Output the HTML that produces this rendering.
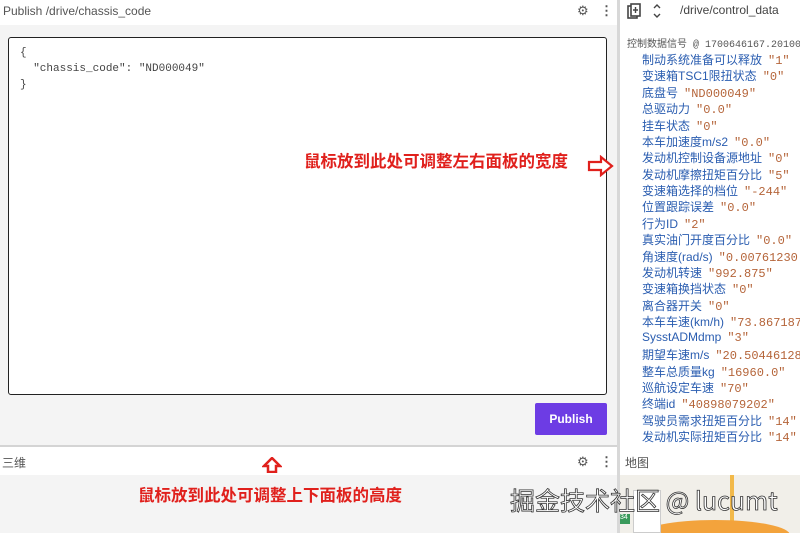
<!DOCTYPE html>
<html style="overflow:hidden;width:800px;height:533px"><head><meta charset="utf-8"><style>
*{margin:0;padding:0;box-sizing:border-box}
body{width:800px;height:533px;overflow:hidden;background:#f4f4f4;font-family:"Liberation Sans","Noto Sans CJK SC",sans-serif;position:relative}
.abs{position:absolute}
.hdr{font-size:12px;color:#555}
.mono{font-family:"Liberation Mono","Noto Sans CJK SC",monospace}
.row{position:absolute;left:642px;font-size:12px;color:#2a5db0;white-space:nowrap}
.row span{color:#b5653a;font-family:"Liberation Mono",monospace;margin-left:6px}
.red{color:#e0201c;font-weight:bold;font-size:16.5px;font-family:"Noto Sans CJK SC",sans-serif;white-space:nowrap}
</style></head><body>
<div class="abs" style="left:0;top:0;width:617px;height:25px;background:#fff"></div>
<div class="abs hdr" style="left:3px;top:4px">Publish /drive/chassis_code</div>
<div class="abs" style="left:577px;top:3px;font-size:13px;color:#555">⚙</div>
<div class="abs" style="left:600px;top:3px;font-size:13px;color:#555;font-weight:bold">⋮</div>
<div class="abs" style="left:8px;top:37px;width:599px;height:358px;background:#fff;border:1px solid #222;border-radius:3px"></div>
<div class="abs mono" style="left:20px;top:45px;font-size:11px;line-height:16px;color:#444;white-space:pre">{
  "chassis_code": "ND000049"
}</div>
<div class="abs" style="left:535px;top:403px;width:72px;height:32px;background:#6d3ce4;border-radius:2px;color:#fff;font-size:12px;font-weight:bold;text-align:center;line-height:32px">Publish</div>
<div class="abs" style="left:0;top:445px;width:620px;height:2px;background:#d4d4d4"></div>
<div class="abs" style="left:0;top:447px;width:618px;height:28px;background:#fff"></div>
<div class="abs hdr" style="left:2px;top:454px">三维</div>
<div class="abs" style="left:577px;top:454px;font-size:13px;color:#555">⚙</div>
<div class="abs" style="left:600px;top:454px;font-size:13px;color:#555;font-weight:bold">⋮</div>
<svg class="abs" style="left:262px;top:457px" width="20" height="16"><path d="M10 1 L18 9 H14 V15 H6 V9 H2 Z" fill="#fff" stroke="#e0201c" stroke-width="2.5"/></svg>
<div class="abs red" style="left:138px;top:482px">鼠标放到此处可调整上下面板的高度</div>
<div class="abs" style="left:617px;top:0;width:3px;height:533px;background:#d8d8d8"></div>
<div class="abs" style="left:620px;top:0;width:180px;height:447px;background:#fff"></div>
<svg class="abs" style="left:627px;top:3px" width="14" height="16"><rect x="1" y="3" width="9" height="12" fill="none" stroke="#444" stroke-width="1.6"/><rect x="4" y="1" width="9" height="12" fill="#fff" stroke="#444" stroke-width="1.6"/><path d="M8.5 4v6M6 7h5" stroke="#444" stroke-width="1.4"/></svg>
<svg class="abs" style="left:652px;top:3px" width="10" height="16"><path d="M2 5 L5 2 L8 5 M2 11 L5 14 L8 11" fill="none" stroke="#444" stroke-width="1.4"/></svg>
<div class="abs" style="left:680px;top:3px;font-size:12px;color:#444">/drive/control_data</div>
<div class="abs mono" style="left:627px;top:35px;font-size:10px;color:#555;white-space:nowrap"><span style="font-family:'Noto Sans CJK SC'">控制数据信号</span> @ 1700646167.20100</div>
<div class="row" style="top:51px">制动系统准备可以释放<span>"1"</span></div>
<div class="row" style="top:67px">变速箱TSC1限扭状态<span>"0"</span></div>
<div class="row" style="top:84px">底盘号<span>"ND000049"</span></div>
<div class="row" style="top:100px">总驱动力<span>"0.0"</span></div>
<div class="row" style="top:117px">挂车状态<span>"0"</span></div>
<div class="row" style="top:133px">本车加速度m/s2<span>"0.0"</span></div>
<div class="row" style="top:149px">发动机控制设备源地址<span>"0"</span></div>
<div class="row" style="top:166px">发动机摩擦扭矩百分比<span>"5"</span></div>
<div class="row" style="top:182px">变速箱选择的档位<span>"-244"</span></div>
<div class="row" style="top:198px">位置跟踪误差<span>"0.0"</span></div>
<div class="row" style="top:215px">行为ID<span>"2"</span></div>
<div class="row" style="top:231px">真实油门开度百分比<span>"0.0"</span></div>
<div class="row" style="top:248px">角速度(rad/s)<span>"0.00761230</span></div>
<div class="row" style="top:264px">发动机转速<span>"992.875"</span></div>
<div class="row" style="top:280px">变速箱换挡状态<span>"0"</span></div>
<div class="row" style="top:297px">离合器开关<span>"0"</span></div>
<div class="row" style="top:313px">本车车速(km/h)<span>"73.867187</span></div>
<div class="row" style="top:330px">SysstADMdmp<span>"3"</span></div>
<div class="row" style="top:346px">期望车速m/s<span>"20.50446128</span></div>
<div class="row" style="top:363px">整车总质量kg<span>"16960.0"</span></div>
<div class="row" style="top:379px">巡航设定车速<span>"70"</span></div>
<div class="row" style="top:395px">终端id<span>"40898079202"</span></div>
<div class="row" style="top:412px">驾驶员需求扭矩百分比<span>"14"</span></div>
<div class="row" style="top:428px">发动机实际扭矩百分比<span>"14"</span></div>
<div class="abs red" style="left:304px;top:148px">鼠标放到此处可调整左右面板的宽度</div>
<svg class="abs" style="left:587px;top:155px" width="28" height="22"><path d="M2 7 H14 V2 L25 11 L14 20 V15 H2 Z" fill="#fff" stroke="#e0201c" stroke-width="2.2"/></svg>
<div class="abs" style="left:620px;top:447px;width:180px;height:28px;background:#fff"></div>
<div class="abs hdr" style="left:625px;top:454px">地图</div>
<div class="abs" style="left:620px;top:475px;width:180px;height:58px;background:#f1efe9;overflow:hidden">
<div class="abs" style="left:110px;top:0;width:4px;height:58px;background:#f2b94a"></div>
<div class="abs" style="left:20px;top:45px;width:150px;height:30px;border-radius:50%;background:#f3a33c"></div>
<div class="abs" style="left:0;top:39px;width:10px;height:10px;background:#3a9a5a;color:#fff;font-size:7px">34</div>
<div class="abs" style="left:13px;top:15px;width:28px;height:43px;background:#fff;border:1px solid #ccc"></div>
</div>
<div class="abs" style="left:510px;top:482px;font-size:25px;color:#fff;white-space:nowrap;-webkit-text-stroke:0.8px #333;font-family:'Noto Sans CJK SC',sans-serif">掘金技术社区 @ lucumt</div>
</body></html>
